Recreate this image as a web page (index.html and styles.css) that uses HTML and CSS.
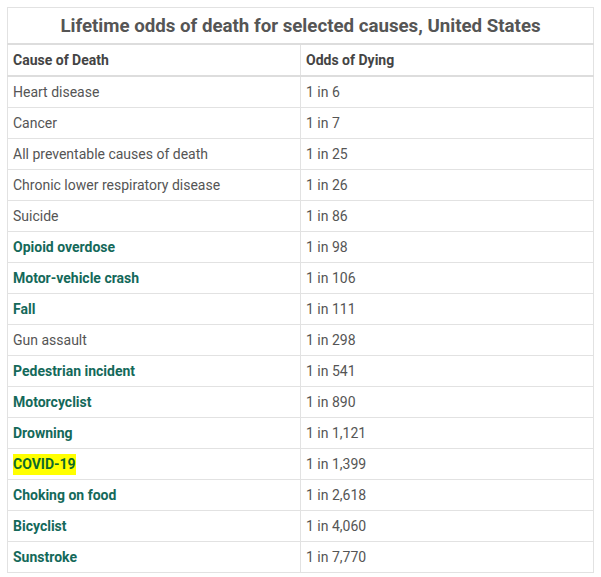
FILE: index.html
```html
<!DOCTYPE html>
<html>
<head>
<meta charset="utf-8">
<link rel="stylesheet" href="styles.css">
</head>
<body>
<div class="wrap">
<table class="odds">
  <thead>
    <tr class="caption-row"><th colspan="2" class="caption">Lifetime odds of death for selected causes, United States</th></tr>
    <tr class="head-row"><th>Cause of Death</th><th>Odds of Dying</th></tr>
  </thead>
  <tbody>
    <tr><td>Heart disease</td><td>1 in 6</td></tr>
    <tr><td>Cancer</td><td>1 in 7</td></tr>
    <tr><td>All preventable causes of death</td><td>1 in 25</td></tr>
    <tr><td>Chronic lower respiratory disease</td><td>1 in 26</td></tr>
    <tr><td>Suicide</td><td>1 in 86</td></tr>
    <tr><td><a class="link">Opioid overdose</a></td><td>1 in 98</td></tr>
    <tr><td><a class="link">Motor-vehicle crash</a></td><td>1 in 106</td></tr>
    <tr><td><a class="link">Fall</a></td><td>1 in 111</td></tr>
    <tr><td>Gun assault</td><td>1 in 298</td></tr>
    <tr><td><a class="link">Pedestrian incident</a></td><td>1 in 541</td></tr>
    <tr><td><a class="link">Motorcyclist</a></td><td>1 in 890</td></tr>
    <tr><td><a class="link">Drowning</a></td><td>1 in 1,121</td></tr>
    <tr><td><a class="link covid"><span class="mark">COVID-19</span></a></td><td>1 in 1,399</td></tr>
    <tr><td><a class="link">Choking on food</a></td><td>1 in 2,618</td></tr>
    <tr><td><a class="link">Bicyclist</a></td><td>1 in 4,060</td></tr>
    <tr><td><a class="link">Sunstroke</a></td><td>1 in 7,770</td></tr>
  </tbody>
</table>
</div>
</body>
</html>
```
FILE: styles.css
```css
html, body {
  margin: 0;
  padding: 0;
  background: #fff;
}
body {
  font-family: Roboto, "Liberation Sans", sans-serif;
  color: #555;
}
.wrap {
  padding: 7px 0 0 7px;
}
.odds {
  width: 587px;
  border-collapse: collapse;
  border: 1px solid #ddd;
  table-layout: fixed;
}
.odds th, .odds td {
  text-align: left;
  padding: 0 5px;
  font-size: 14px;
  border: 1px solid #e2e2e2;
  vertical-align: middle;
}
.odds th:first-child, .odds td:first-child {
  width: 282px;
}
.caption-row th.caption {
  height: 35px;
  text-align: center;
  font-size: 18.7px;
  font-weight: 700;
  color: #555;
  border-bottom: 2px solid #ddd;
  padding: 0;
}
.head-row th {
  height: 30px;
  font-weight: 700;
  color: #444;
  border-bottom: 2px solid #ddd;
}
.odds td {
  height: 30px;
  color: #555;
}
.link {
  color: #14695a;
  font-weight: 700;
  text-decoration: none;
}
.covid {
  color: #0e6a2a;
}
.mark {
  background: #ffff00;
  padding: 2px 0 3px;
}
```
